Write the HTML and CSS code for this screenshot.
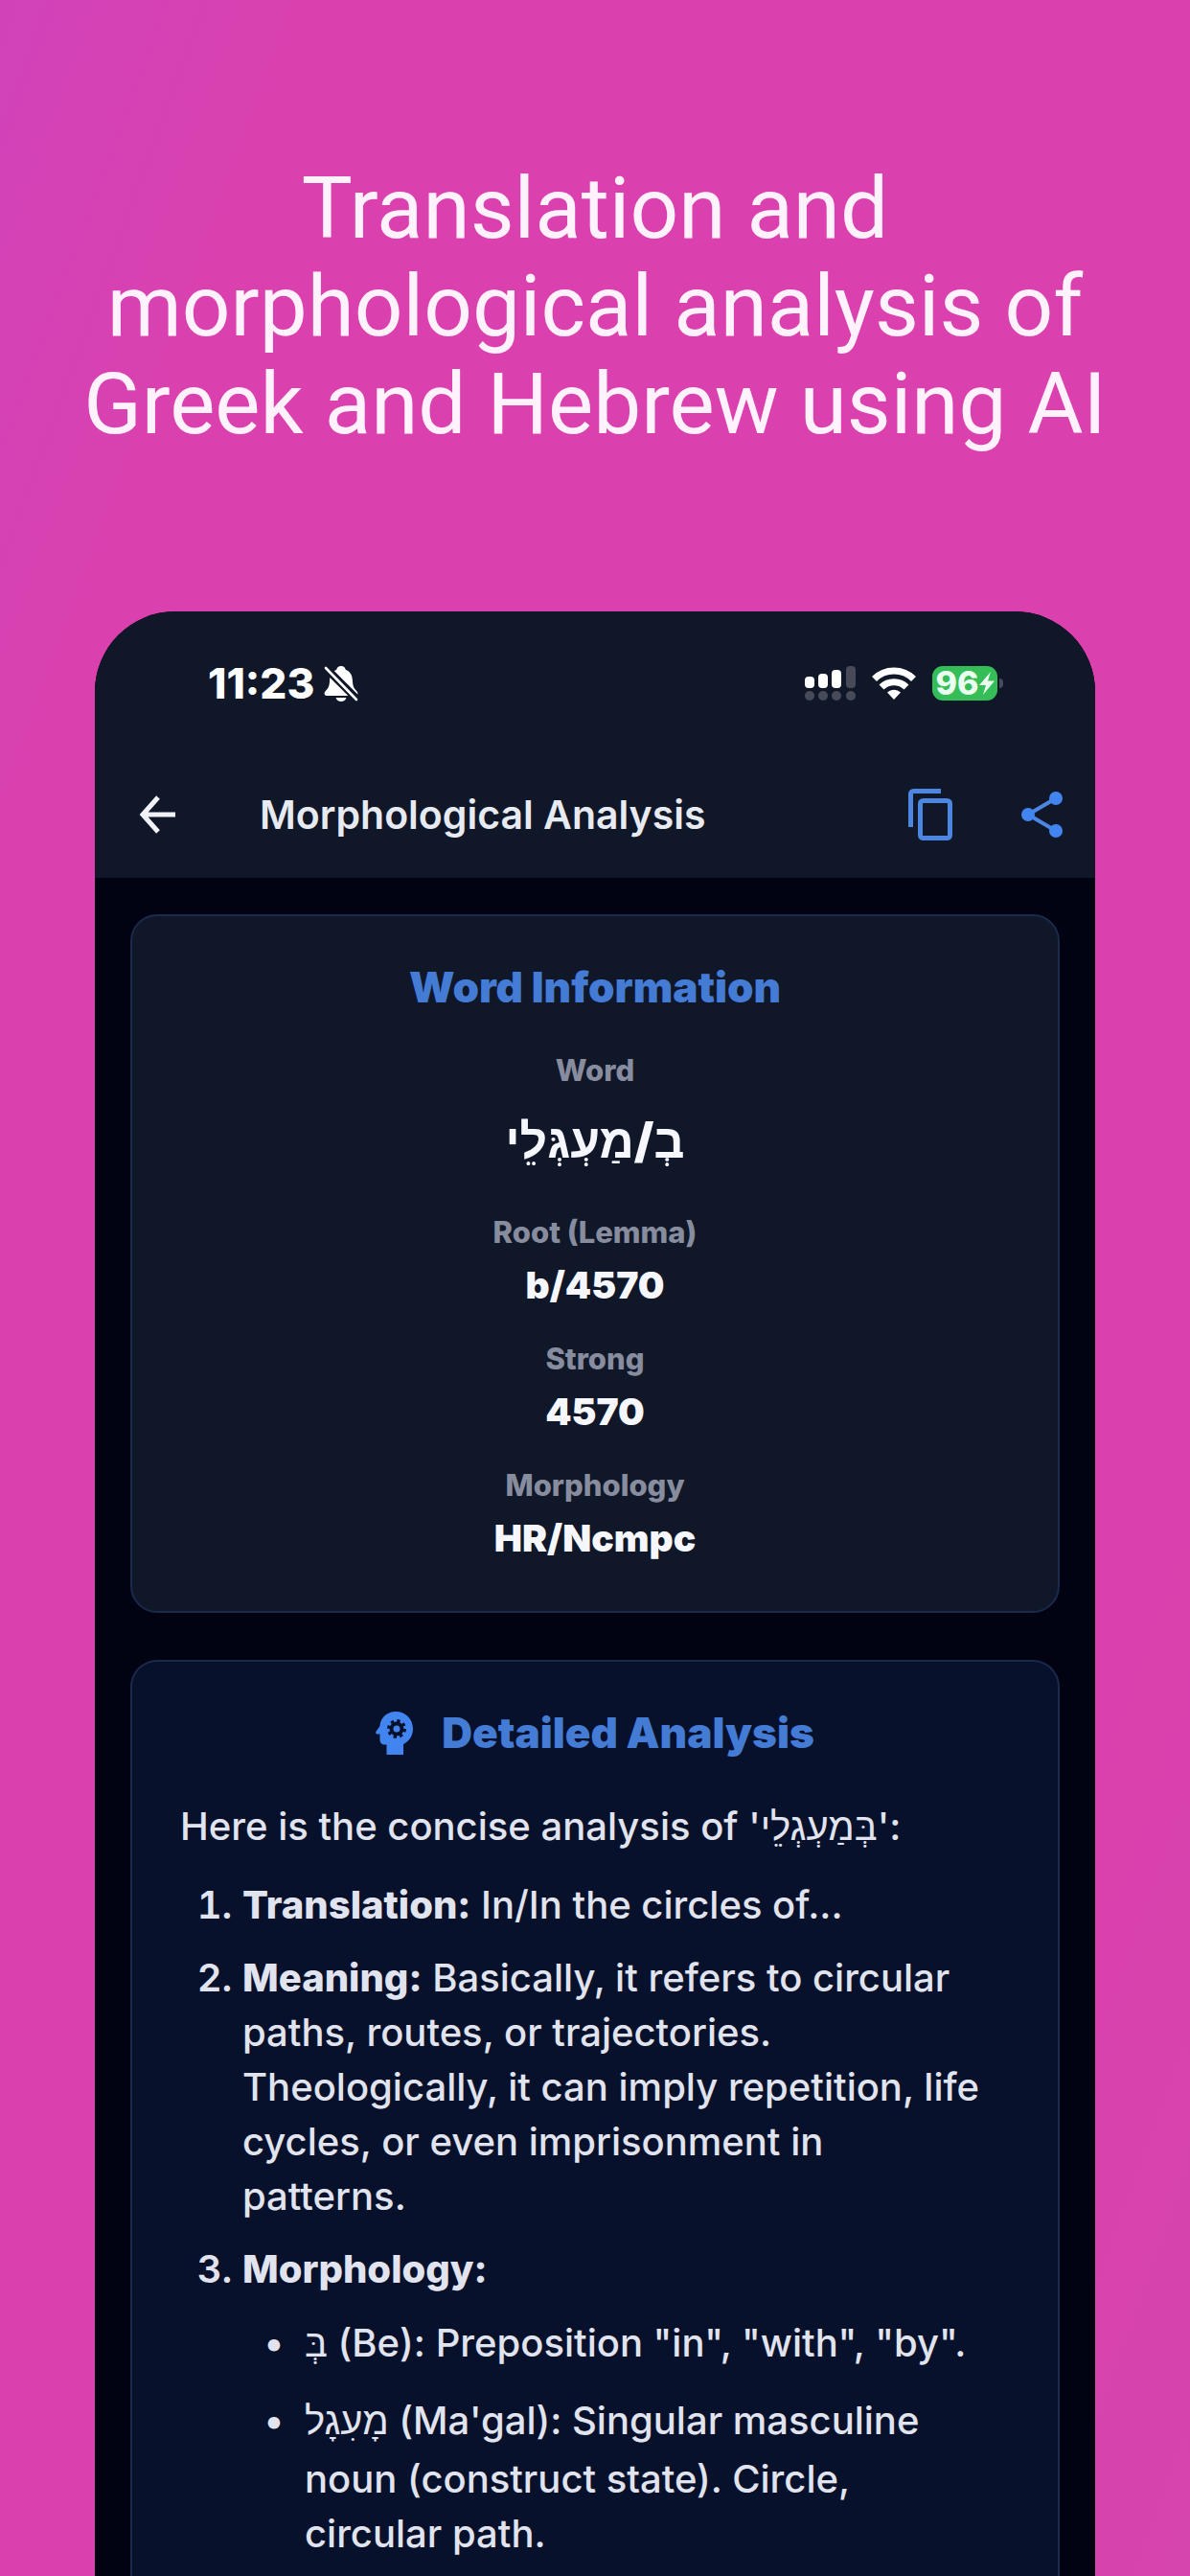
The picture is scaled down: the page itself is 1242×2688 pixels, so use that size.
FILE: index.html
```html
<!DOCTYPE html>
<html lang="en">

<head>
    <meta charset="UTF-8">
    <meta name="viewport" content="width=device-width, initial-scale=1.0">
    <title>Morphological Analysis</title>
    <link rel="stylesheet" href="styles.css">
</head>

<body>
    <h1 class="headline">Translation and morphological analysis of Greek and Hebrew using AI</h1>

    <div class="phone">
        <header class="top">
            <div class="status-bar">
                <span class="time">11:23</span>
                <svg class="bell" width="36" height="38" viewBox="0 0 36 38" fill="#fff">
                    <path d="M18 1c-2.600 0-4.400 1.700-4.700 3.800C7.800 7 6.200 11.500 6 17c-.2 5-1.500 7.600-4.600 10.400C-.2 29 .6 32 3 32h30c2.400 0 3.200-3 1.600-4.600C31.500 24.600 30.200 22 30 17c-.2-5.500-1.800-10-7.300-12.200C22.400 2.700 20.600 1 18 1z" />
                    <path d="M12.500 34h11c-.8 2.500-2.800 4-5.500 4s-4.700-1.500-5.500-4z" />
                    <path d="M1 2l34 34" stroke="#101728" stroke-width="8" />
                    <path d="M2 3l32 33" stroke="#fff" stroke-width="2.600" stroke-linecap="round" />
                </svg>
                <div class="status-icons">
                    <svg width="53" height="36" viewBox="0 0 53 36">
                        <g fill="#fff">
                            <rect x="0" y="11" width="10" height="12" rx="4" />
                            <rect x="14" y="8" width="10" height="15" rx="4" />
                            <rect x="28" y="4" width="10" height="19" rx="4" />
                        </g>
                        <g fill="#474b59">
                            <rect x="43" y="0" width="10" height="23" rx="4" />
                            <circle cx="5" cy="31" r="5" />
                            <circle cx="19" cy="31" r="5" />
                            <circle cx="33" cy="31" r="5" />
                            <circle cx="48" cy="31" r="5" />
                        </g>
                    </svg>
                    <svg width="46" height="34" viewBox="0 0 46 34" fill="none" stroke="#fff" stroke-width="7">
                        <path d="M2.500 12.500a29 29 0 0 1 41 0" />
                        <path d="M10 21a18.500 18.500 0 0 1 26 0" />
                        <path d="M23 34l-7-7.500a10 10 0 0 1 14 0z" fill="#fff" stroke="none" />
                    </svg>
                    <div class="battery">
                        <span class="battery-level">96<svg width="16" height="24" viewBox="0 0 16 24" fill="#eafff0"><path d="M12 0L0 14h7L4 24 16 9.500H9z" /></svg></span>
                        <span class="battery-tip"></span>
                    </div>
                </div>
            </div>

            <div class="app-bar">
                <button type="button" class="icon-btn" aria-label="Back">
                    <svg width="38" height="40" viewBox="0 0 38 40" fill="none" stroke="#f0f2f8" stroke-width="5">
                        <path d="M38 20H4M20 2L4 20l16 18" />
                    </svg>
                </button>
                <h2 class="app-title">Morphological Analysis</h2>
                <button type="button" class="icon-btn" aria-label="Copy">
                    <svg width="46" height="54" viewBox="0 0 46 54" fill="none" stroke="#4d86e0" stroke-width="5">
                        <path d="M2.500 40V5.500a3 3 0 0 1 3-3H34" />
                        <rect x="12.500" y="12.500" width="31" height="39" rx="3" />
                    </svg>
                </button>
                <button type="button" class="icon-btn" aria-label="Share">
                    <svg width="43" height="48" viewBox="0 0 43 48" fill="#4285f0" stroke="#4d86e0" stroke-width="4">
                        <path d="M36 7L7 24l29 17" fill="none" />
                        <g stroke="none">
                            <circle cx="36" cy="7" r="7" />
                            <circle cx="7" cy="24" r="7" />
                            <circle cx="36" cy="41" r="7" />
                        </g>
                    </svg>
                </button>
            </div>
        </header>

        <main class="content">
            <section class="card word-card">
                <h3 class="card-title">Word Information</h3>
                <dl class="word-info">
                    <div class="info-row">
                        <dt>Word</dt>
                        <dd class="hebrew-word" lang="he" dir="rtl">בְ/מַעְגְּלֵי</dd>
                    </div>
                    <div class="info-row">
                        <dt>Root (Lemma)</dt>
                        <dd>b/4570</dd>
                    </div>
                    <div class="info-row">
                        <dt>Strong</dt>
                        <dd>4570</dd>
                    </div>
                    <div class="info-row">
                        <dt>Morphology</dt>
                        <dd>HR/Ncmpc</dd>
                    </div>
                </dl>
            </section>

            <section class="card analysis-card">
                <h3 class="card-title">
                    <svg width="39" height="45" viewBox="0 0 39 45" fill="#4285f0">
                        <path d="M21 0C12 0 5 6.500 4.500 15L.4 21c-.6 1.200 0 2.500 1.300 2.500H4.500V29c0 3.500 2 5.500 5 5.500h2V45H29V34c6-3 10-8.500 10-16C39 7.500 31 0 21 0z" />
                        <circle cx="22" cy="18" r="5.500" fill="none" stroke="#07112c" stroke-width="4" />
                        <circle cx="22" cy="18" r="8.500" fill="none" stroke="#07112c" stroke-width="3" stroke-dasharray="3.340 3.340" />
                    </svg>
                    Detailed Analysis
                </h3>
                <p>Here is the concise analysis of '<span lang="he">בְּמַעְגְלֵי</span>':</p>
                <ol class="analysis-list">
                    <li><strong>Translation:</strong> In/In the circles of...</li>
                    <li><strong>Meaning:</strong> Basically, it refers to circular paths, routes, or trajectories. Theologically, it can imply repetition, life cycles, or even imprisonment in patterns.</li>
                    <li><strong>Morphology:</strong>
                        <ul class="morph-list">
                            <li><span class="he" lang="he">בְּ</span> (Be): Preposition "in", "with", "by".</li>
                            <li><span class="he" lang="he">מָעִגָל</span> (Ma'gal): Singular masculine noun (construct state). Circle, circular path.</li>
                        </ul>
                    </li>
                </ol>
            </section>
        </main>
    </div>
</body>

</html>
```
FILE: styles.css
```css
* {
    box-sizing: border-box;
    margin: 0;
    padding: 0;
}

body {
    display: flex;
    flex-direction: column;
    min-height: 100vh;
    padding: 167px 78px 0;
    background: linear-gradient(110deg, #d142b9 0%, #da41ae 16%, #da41ae 80%, #d644ad 100%);
    font-family: Inter, "Liberation Sans", sans-serif;
    color: #e1e4ee;
}

svg {
    display: block;
    flex-shrink: 0;
}

.headline {
    margin-bottom: 165px;
    font-family: Roboto, sans-serif;
    font-size: 89px;
    font-weight: 400;
    line-height: 102px;
    text-align: center;
    color: #fff2fd;
}

.phone {
    flex: 1;
    display: flex;
    flex-direction: column;
    margin: 0 21px;
    border-radius: 84px 84px 0 0;
    overflow: hidden;
    background: #010312;
}

.top {
    background: #101728;
}

/* status bar */
.status-bar {
    display: flex;
    align-items: center;
    padding: 53px 96px 49px 118px;
    line-height: 44px;
    color: #fff;
}

.time {
    font-size: 44px;
    font-weight: 800;
}

.bell {
    margin-left: 10px;
}

.status-icons {
    display: flex;
    align-items: center;
    gap: 17px;
    margin-left: auto;
}

.battery {
    display: flex;
    align-items: center;
    gap: 2px;
}

.battery-level {
    display: flex;
    align-items: center;
    justify-content: center;
    width: 68px;
    height: 36px;
    border-radius: 11px;
    background: #35bd58;
    font-size: 34px;
    font-weight: 800;
    color: #eafff0;
}

.battery-tip {
    width: 4px;
    height: 10px;
    border-radius: 0 4px 4px 0;
    background: #474b59;
}

/* app bar */
.app-bar {
    display: flex;
    align-items: center;
    gap: 72px;
    min-height: 132px;
    padding: 0 34px 0 46px;
}

.icon-btn {
    border: none;
    background: none;
    cursor: pointer;
}

.app-title {
    flex: 1;
    margin-left: 16px;
    font-size: 41px;
    font-weight: 600;
    line-height: 50px;
    color: #e8eaf2;
}

/* cards */
.content {
    flex: 1;
    display: flex;
    flex-direction: column;
    gap: 49px;
    padding: 38px 37px 0;
}

.card {
    padding: 49px 50px 53px;
    border: 2px solid #1b2a4c;
    border-radius: 28px;
    background: #101728;
}

.card-title {
    display: flex;
    align-items: center;
    justify-content: center;
    gap: 30px;
    margin-bottom: 44px;
    font-size: 44px;
    font-weight: 900;
    line-height: 50px;
    color: #447bd4;
}

.word-info {
    display: flex;
    flex-direction: column;
    gap: 36px;
    text-align: center;
}

.info-row dt {
    margin-bottom: 14px;
    font-size: 31px;
    font-weight: 800;
    line-height: 36px;
    color: #878d9e;
}

.info-row dd {
    font-size: 39px;
    font-weight: 900;
    line-height: 46px;
    color: #f5f7fc;
}

.info-row .hebrew-word {
    font-size: 50px;
    line-height: 83px;
}

.analysis-card {
    flex: 1;
    border-bottom: none;
    border-radius: 28px 28px 0 0;
    background: #07112c;
    font-size: 40px;
    font-weight: 500;
    line-height: 57px;
}

.analysis-list {
    display: flex;
    flex-direction: column;
    gap: 19px;
    margin-top: 25px;
    padding: 0 16px 0 65px;
}

.analysis-list strong {
    font-weight: 800;
}

.analysis-list > li::marker {
    font-weight: 600;
}

.morph-list {
    display: flex;
    flex-direction: column;
    gap: 16px;
    margin-top: 16px;
    padding-left: 65px;
    list-style-type: "•\00a0\00a0";
}

.morph-list .he {
    line-height: 65px;
}
```
